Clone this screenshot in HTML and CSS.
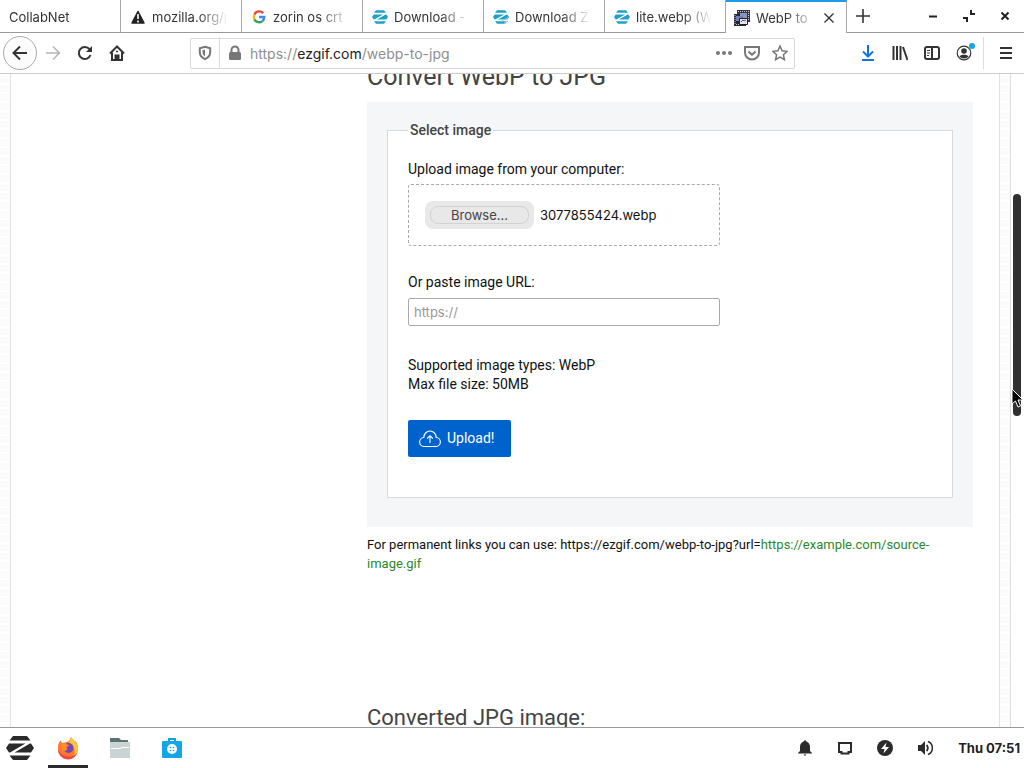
FILE: index.html
```html
<!DOCTYPE html>
<html lang="en">
<head>
	<meta charset="utf-8">
	<title>WebP to JPG</title>
	<link rel="stylesheet" href="styles.css">
</head>
<body>
	<svg class="defs" aria-hidden="true">
		<symbol id="zorin" viewBox="0 0 28 24">
			<path d="M7 0h14l3.500 4.500h-21zM3.500 19.500h21L21 24H7z"/>
			<path d="M3 7.500h16.500L4 16.500H3L0 12zM24 7.500h1l3 4.500-3 4.500H8.500z"/>
		</symbol>
	</svg>

	<header class="tabs">
		<div class="tab"><span class="title">CollabNet</span></div>
		<div class="tab">
			<svg class="fav" viewBox="0 0 16 16"><path d="M8 2.500L14 14H2z" fill="#222" stroke="#222" stroke-width="1.5" stroke-linejoin="round"/><path d="M8 5v5M8 11.500v2" stroke="#fff" stroke-width="1.600"/></svg>
			<span class="title">mozilla.org/p</span>
		</div>
		<div class="tab">
			<svg class="fav" viewBox="0 0 16 16" fill="none" stroke-width="2.4"><path d="M12.2 4.2A5.2 5.2 0 0 0 3.4 5.6" stroke="#ea4335"/><path d="M3.4 5.6a5.2 5.2 0 0 0 0 4.8" stroke="#fbbc05"/><path d="M3.4 10.4a5.2 5.2 0 0 0 8 1.7" stroke="#34a853"/><path d="M11.4 12.1A5.2 5.2 0 0 0 13.2 8H8" stroke="#4285f4"/></svg>
			<span class="title">zorin os crt</span>
		</div>
		<div class="tab">
			<svg class="fav zor"><use href="#zorin"/></svg>
			<span class="title">Download -</span>
		</div>
		<div class="tab">
			<svg class="fav zor" viewBox="0 0 16 14"><use href="#zorin" width="16" height="14"/><path d="M8 11.500l7-4M11 13l4-2" stroke="#8bcfe6"/></svg>
			<span class="title">Download Z</span>
		</div>
		<div class="tab">
			<svg class="fav zor"><use href="#zorin"/></svg>
			<span class="title">lite.webp (W</span>
		</div>
		<div class="tab active">
			<svg class="fav" viewBox="0 0 16 16"><path d="M3 0h13v12H3z" fill="#30333f"/><path d="M0 4h12v12H0z" fill="#252936"/><path d="M6 3h7v5H6z" fill="#8795c6"/><path d="M2 6h7v5H2z" fill="#6f7fb5"/><path d="M1 5v10M14.500 1v10" stroke="#ccc" stroke-dasharray="1 1"/><path d="M5.500 8.500h8v6h-8z" fill="#e3e6ef" stroke="#222"/><path d="M7 12l2-2 1 1 2-1" stroke="#555" fill="none"/><path d="M4 1.500h10M2 14.500h3" stroke="#ccc" stroke-dasharray="1 1"/></svg>
			<span class="title">WebP to</span>
			<button class="close" aria-label="Close tab"><svg width="12" height="12" viewBox="0 0 12 12"><path d="M1.5 1.5l9 9M10.5 1.5l-9 9" stroke="#333" stroke-width="1.4"/></svg></button>
		</div>
		<button class="newtab" aria-label="New tab"><svg width="16" height="16" viewBox="0 0 16 16"><path d="M8 1v14M1 8h14" stroke="#333" stroke-width="1.6"/></svg></button>
		<div class="wincontrols">
			<button aria-label="Minimize"><svg width="14" height="14" viewBox="0 0 14 14"><path d="M3 7.5h8" stroke="#222" stroke-width="2"/></svg></button>
			<button aria-label="Restore"><svg width="14" height="14" viewBox="0 0 14 14"><path d="M9 1v4h4M1 9h4v4" fill="none" stroke="#222" stroke-width="2"/></svg></button>
			<button aria-label="Close"><svg width="14" height="14" viewBox="0 0 14 14"><path d="M3.500 3.500l7 7M10.500 3.500l-7 7" stroke="#222" stroke-width="2"/></svg></button>
		</div>
	</header>

	<nav class="toolbar">
		<button class="back" aria-label="Back"><svg class="ico" viewBox="0 0 16 16"><path d="M15 8H1.500M8 1.500L1.500 8 8 14.500"/></svg></button>
		<button class="fwd" aria-label="Forward" disabled><svg class="ico" viewBox="0 0 16 16"><path d="M1 8h13.500M8 1.500L14.500 8 8 14.500"/></svg></button>
		<button aria-label="Reload"><svg class="ico" viewBox="0 0 16 16"><path d="M13.500 10A6 6 0 1 1 12.500 4.200L14 6"/><path d="M15 1v6H9z" fill="#333" stroke="none"/></svg></button>
		<button aria-label="Home"><svg class="ico" viewBox="0 0 16 16"><path d="M1 8.500L8 1.500l7 7M3 7.500V15h10V7.500"/><path d="M6.500 15v-4.500h3V15" fill="#333"/><path d="M7 6.500h2" stroke-width="1.500"/></svg></button>
		<div class="urlbar">
			<button class="shield" aria-label="Protections"><svg class="ico" viewBox="0 0 16 16"><path d="M8 1.800l5.200 1.500V7c0 3.500-2.200 5.800-5.200 7.200C5 12.800 2.800 10.500 2.800 7V3.300z"/><path d="M8 4.500v7C6.300 10.200 5.500 9 5.500 7V5.200z" fill="#777" stroke="none"/></svg></button>
			<button class="lock" aria-label="Site information"><svg class="ico" viewBox="0 0 16 16"><rect x="2" y="7" width="12" height="8" rx="1.500" fill="#777" stroke="none"/><path d="M4.500 8V5a3.500 3.500 0 0 1 7 0v3"/></svg></button>
			<div class="url" role="textbox" aria-label="Address" contenteditable="true" spellcheck="false">https://<b>ezgif.com</b>/webp-to-jpg</div>
			<button aria-label="Page actions"><svg class="ico" viewBox="0 0 16 16"><g fill="#777" stroke="none"><circle cx="2" cy="8" r="2"/><circle cx="8" cy="8" r="2"/><circle cx="14" cy="8" r="2"/></g></svg></button>
			<button aria-label="Save to Pocket"><svg class="ico" viewBox="0 0 16 16"><path d="M1 2h14v5.500a7 7 0 0 1-14 0z"/><path d="M4.500 6.500L8 9.700l3.500-3.200"/></svg></button>
			<button aria-label="Bookmark"><svg class="ico" viewBox="0 0 16 16"><path d="M8 1l2.100 4.700 5 .6-3.700 3.400 1 5L8 12.200l-4.400 2.500 1-5L.9 6.300l5-.6z" stroke-width="1.500"/></svg></button>
		</div>
		<button aria-label="Downloads"><svg class="ico blue" viewBox="0 0 16 16"><path d="M8 0v11M3 6.500l5 5 5-5M2 15h12"/></svg></button>
		<button aria-label="Library"><svg class="ico" viewBox="0 0 16 16"><path d="M1.500 1v14M5 1v14M8.500 1v14M11 2l4.500 13"/></svg></button>
		<button aria-label="Sidebars"><svg class="ico" viewBox="0 0 16 16"><rect x="1" y="2" width="14" height="12" rx="2"/><path d="M8 2v12"/><path d="M3 5.500h3M3 8h3M3 10.500h2" stroke-width="1"/></svg></button>
		<button class="account" aria-label="Account"><svg class="ico" viewBox="0 0 16 16"><circle cx="8" cy="8" r="6.800" stroke-width="1.200"/><circle cx="8" cy="6" r="2.800" fill="#333" stroke="none"/><path d="M3.500 11.500C4.500 9 11.500 9 12.500 11.500 10.500 14 5.500 14 3.500 11.500z" fill="#333" stroke="none"/></svg></button>
		<button class="menu" aria-label="Menu"><svg class="ico" viewBox="0 0 16 16"><path d="M2 3h12M2 8h12M2 13h12"/></svg></button>
	</nav>

	<div class="viewport">
		<div class="page">
			<main>
				<h1>Convert WebP to JPG</h1>
				<form class="panel">
					<fieldset>
						<legend>Select image</legend>
						<label for="file">Upload image from your computer:</label>
						<div class="drop">
							<input type="file" id="file" hidden>
							<button type="button" class="browse" onclick="document.getElementById('file').click()"><span>Browse...</span></button>
							<span class="filename">3077855424.webp</span>
						</div>
						<label for="url">Or paste image URL:</label>
						<input type="text" class="text" id="url" placeholder="https://">
						<p class="hint">Supported image types: WebP<br>Max file size: 50MB</p>
						<button type="button" class="upload">
							<svg width="22" height="18" viewBox="0 0 22 18" fill="none" stroke="#fff" stroke-width="1.100"><path d="M8 16.500H5.500a4.500 4.500 0 0 1-.7-9C5 3.500 7.800 1 11 1s6 2.500 6.200 6.500a4.500 4.500 0 0 1-.7 9H14M8 16.500h6"/><path d="M11 13V6M8.200 8.500L11 5.700l2.800 2.800"/></svg>
							Upload!
						</button>
					</fieldset>
				</form>
				<p class="permalink">For permanent links you can use: https://ezgif.com/webp-to-jpg?url=<a href="#">https://example.com/source-image.gif</a></p>
				<h2>Converted JPG image:</h2>
			</main>
		</div>
		<div class="scrollbar"><div class="thumb"></div></div>
	</div>

	<footer class="taskbar">
		<button aria-label="Zorin menu"><svg class="start" width="28" height="24"><use href="#zorin"/></svg></button>
		<button class="running" aria-label="Firefox"><svg width="24" height="24" viewBox="0 0 24 24"><path d="M2 13C1.500 9 3 6 4.500 4.500L6 7l3-.5L13 5l2-4c1 2 2.500 3 3.500 4.500l1-.5c2 3 3 5.500 2.500 9A10 10 0 0 1 2 13z" fill="#ff7a2a"/><path d="M15 1c1 2 7 5 7 12a9 9 0 0 1-4 7c2-6 0-10-5-13z" fill="#ffc53a"/><path d="M2 13a10 10 0 0 0 19 4.500C16 22 6 22 2 13z" fill="#ed4650"/><circle cx="12.500" cy="12" r="5" fill="#7545b5"/><path d="M4.500 8c3-2 5-1 7 .5l2 1-3 1.500 1 2-2 2c-3 0-5-3-5-7z" fill="#ff8b2b"/></svg></button>
		<button aria-label="Files"><svg width="24" height="24" viewBox="0 0 24 24"><path d="M2 2h9l2 2h7v5H2z" fill="#607176"/><path d="M2 6h20v16H2z" fill="#cad4d4"/><path d="M3 12.500h9l2-1h7" fill="none" stroke="#fff"/></svg></button>
		<button aria-label="Software"><svg width="24" height="24" viewBox="0 0 24 24"><path d="M9 6V3h6v3" fill="none" stroke="#15a0df" stroke-width="2"/><rect x="2" y="5" width="20" height="17" rx="1" fill="#15a6e8"/><circle cx="12" cy="13" r="5" fill="#fff"/><g fill="#15a0df"><circle cx="10.500" cy="11.500" r=".8"/><circle cx="13.500" cy="11.500" r=".8"/><circle cx="10.500" cy="14.500" r=".8"/><circle cx="13.500" cy="14.500" r=".8"/></g></svg></button>
		<div class="tray">
			<button aria-label="Notifications"><svg width="16" height="16" viewBox="0 0 16 16"><path d="M8 0l1.500 1.500C12 2.500 13 4.500 13 7v4l2 2v.5H1V13l2-2V7c0-2.500 1-4.500 3.500-5.500zM6.500 14.500h3L8 16z"/></svg></button>
			<button aria-label="Display"><svg width="16" height="16" viewBox="0 0 16 16"><path d="M2 3h12v9h-2.500v1.500h-7V12H2z" fill="none" stroke="#2b2b2b" stroke-width="2"/></svg></button>
			<button aria-label="Power"><svg width="16" height="16" viewBox="0 0 16 16"><circle cx="8" cy="8" r="8"/><path d="M9.500 2.500L4 9h3.500l-1 4.500L12 7H8.500z" fill="#fff"/></svg></button>
			<button aria-label="Volume"><svg width="16" height="16" viewBox="0 0 16 16"><path d="M1 5h3l4-4v14l-4-4H1z"/><path d="M9.500 5a4 4 0 0 1 0 6" fill="none" stroke="#2b2b2b" stroke-width="1.800"/><path d="M11 1.500a7 7 0 0 1 0 13" fill="none" stroke="#2b2b2b" stroke-width="1.500"/></svg></button>
		</div>
		<time>Thu 07:51</time>
	</footer>

	<svg class="cursor" width="13" height="20" viewBox="0 0 13 20"><path d="M1 1v15l3.500-3 2.500 6 2.500-1-2.500-6H12z" fill="#000" stroke="#fff"/></svg>
</body>
</html>
```

FILE: styles.css
```css
*{
    box-sizing: border-box;
}
body{
    margin: 0;
    height: 100vh;
    display: flex;
    flex-direction: column;
    overflow: hidden;
    background: #fff;
    font-family: Inter, sans-serif;
    font-size: 13px;
    color: #222;
}
button{
    padding: 0;
    border: 0;
    background: none;
    font: inherit;
    color: inherit;
    display: flex;
    align-items: center;
    justify-content: center;
}
.defs{
    position: absolute;
    width: 0;
    height: 0;
}

/* tab strip */
.tabs{
    flex: none;
    height: 33px;
    display: flex;
}
.tab{
    flex: 0 1 121px;
    min-width: 0;
    display: flex;
    align-items: center;
    gap: 6px;
    padding: 2px 13px 0 9px;
    border-right: 1px solid #aaa;
    border-bottom: 1px solid #999;
}
.fav{
    flex: none;
    width: 16px;
    height: 16px;
}
.zor{
    height: 14px;
    fill: #1fa0cc;
}
.title{
    flex: 1;
    min-width: 0;
    overflow: hidden;
    white-space: nowrap;
    color: #333;
    -webkit-mask-image: linear-gradient(to left, transparent, #000 30px);
    mask-image: linear-gradient(to left, transparent, #000 30px);
}
.active{
    border-top: 2px solid #1e9be8;
    border-bottom: 0;
    padding: 0 10px 0 8px;
}
.close{
    width: 14px;
}
.newtab{
    width: 32px;
    border-bottom: 1px solid #999;
}
.wincontrols{
    flex: 1;
    display: flex;
    justify-content: flex-end;
    padding-right: 1px;
    border-bottom: 1px solid #999;
}
.wincontrols button{
    width: 36px;
}

/* navigation toolbar */
.toolbar{
    flex: none;
    height: 41px;
    display: flex;
    align-items: center;
    padding: 0 0 0 3px;
    border-bottom: 1px solid #ccc;
}
.toolbar button{
    flex: none;
    width: 32px;
    height: 32px;
}
.ico{
    width: 16px;
    height: 16px;
    fill: none;
    stroke: #333;
    stroke-width: 2;
}
.blue{
    stroke: #1473e0;
}
.toolbar .back{
    width: 34px;
    height: 34px;
    border: 1px solid #aaa;
    border-radius: 50%;
    background: #fcfcfc;
}
.fwd .ico{
    stroke: #b5b5b5;
    stroke-width: 1.5;
}
.urlbar{
    flex: 1;
    min-width: 0;
    height: 31px;
    margin: 0 57px;
    display: flex;
    align-items: center;
    border: 1px solid #d8d8d8;
    border-radius: 2px;
}
.urlbar button{
    width: 28px;
}
.urlbar .shield{
    width: 29px;
    border-right: 1px solid #ddd;
}
.urlbar .lock{
    width: 30px;
}
.urlbar .ico{
    stroke: #777;
}
.url{
    flex: 1;
    min-width: 0;
    overflow: hidden;
    white-space: nowrap;
    font-size: 14px;
    color: #8e8e8e;
    outline: 0;
}
.url b{
    font-weight: 400;
    color: #222;
}
.account{
    position: relative;
}
.account::after{
    content: "";
    position: absolute;
    top: 6px;
    right: 5px;
    width: 6px;
    height: 6px;
    border-radius: 50%;
    background: #12a5e8;
}
.toolbar .menu{
    width: 41px;
    margin-left: 3px;
    padding-left: 3px;
    border-left: 1px solid #ddd;
}

/* page */
.viewport{
    flex: 1;
    min-height: 0;
    display: flex;
    overflow: hidden;
    font-family: Roboto, sans-serif;
    font-size: 14px;
    line-height: 19px;
    color: #111;
}
.page{
    flex: 1;
    min-width: 0;
    padding: 0 10px;
    background: repeating-linear-gradient(#fff 0 2px, #fbfbfb 2px 9px);
}
main{
    display: flow-root;
    height: 100%;
    padding: 0 26px 0 356px;
    border: 1px solid #e2e2e2;
    border-width: 0 1px;
    background: #fff;
}
h1, h2{
    margin: 0;
    font-weight: 400;
    color: #444;
    white-space: nowrap;
}
/* scrolled half out of view */
h1{
    margin-top: -12px;
    padding-bottom: 10px;
    font-size: 25px;
    line-height: 30px;
}
.panel{
    padding: 19px 20px 29px;
    background: #f4f6f8;
}
fieldset{
    margin: 0;
    padding: 20px 20px 40px;
    border: 1px solid #d5dade;
    background: #fff;
}
legend{
    padding: 0 2px;
    font-weight: 500;
    color: #444;
}
label{
    display: block;
}
.drop{
    width: 312px;
    max-width: 100%;
    height: 62px;
    margin: 5px 0 27px;
    padding-left: 16px;
    display: flex;
    align-items: center;
    gap: 6px;
    border: 1px dashed #aaa;
    border-radius: 3px;
    font-family: Inter, sans-serif;
    font-size: 13px;
}
.browse{
    width: 109px;
    height: 28px;
    padding: 5px;
    border-radius: 8px;
    background: #e8e8e8;
    color: #444;
}
.browse span{
    flex: 1;
    height: 18px;
    line-height: 16px;
    border: 1px solid #d2d2d2;
    border-radius: 8px;
}
.text{
    display: block;
    width: 312px;
    max-width: 100%;
    height: 28px;
    margin-top: 6px;
    padding: 0 5px;
    border: 1px solid #aaa;
    border-radius: 2px;
    font: 13px Inter, sans-serif;
}
.text::placeholder{
    color: #999;
}
.hint{
    margin: 30px 0 26px;
}
.upload{
    height: 37px;
    padding: 0 17px 0 11px;
    gap: 6px;
    border-radius: 2px;
    background: #0062cc;
    color: #fff;
}
.permalink{
    margin: 8px 0 0;
    font-size: 13px;
}
a{
    color: #2c882c;
    text-decoration: none;
}
h2{
    margin-top: 130px;
    font-size: 22px;
    line-height: 30px;
}
.scrollbar{
    flex: none;
    width: 14px;
    padding: 120px 3px 0 2px;
    border-left: 1px solid #ddd;
}
.thumb{
    height: 222px;
    border-radius: 4px;
    background: #303030;
}

/* desktop panel */
.taskbar{
    flex: none;
    height: 41px;
    display: flex;
    border-top: 1px solid #999;
    padding-right: 4px;
}
.taskbar > button{
    width: 40px;
    margin-right: 12px;
}
.taskbar > button:first-child{
    margin-right: 8px;
}
.taskbar svg{
    fill: #2b2b2b;
}
.running{
    border-bottom: 3px solid #2b2b2b;
    padding-top: 3px;
}
.tray{
    margin-left: auto;
    display: flex;
}
.tray button{
    width: 40px;
}
time{
    padding-left: 13px;
    font-weight: 700;
    line-height: 40px;
    white-space: nowrap;
}
.cursor{
    position: absolute;
    top: 388px;
    right: 0;
}
```
